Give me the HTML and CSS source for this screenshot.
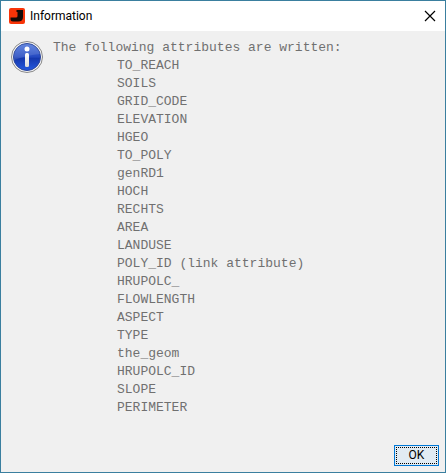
FILE: index.html
```html
<!DOCTYPE html>
<html lang="en">
<head>
  <meta charset="UTF-8" />
  <meta name="viewport" content="width=device-width, initial-scale=1" />
  <title>Information</title>
  <link rel="stylesheet" href="styles.css">
</head>
<body>
  <div class="dialog" role="dialog" aria-labelledby="title">
    <header class="titlebar">
      <svg class="app-icon" width="16" height="16" viewBox="0 0 16 16" aria-hidden="true">
        <rect width="16" height="16" rx="2" fill="#f83408" />
        <path d="M7.500 2h6.500v7q0 4.500-5 4.500H4q-2.500 0-2.500-2.500V9.500H7q1.500 0 1.500-1.500V4h-1z" fill="#140b08" />
      </svg>
      <h1 id="title" class="title">Information</h1>
      <button type="button" class="close" aria-label="Close">
        <svg width="12" height="12" viewBox="0 0 12 12" aria-hidden="true">
          <path d="M1 1l10 10M11 1L1 11" stroke="#000" stroke-width="1.200" />
        </svg>
      </button>
    </header>

    <main class="content">
      <svg class="info-icon" width="32" height="32" viewBox="0 0 32 32" aria-hidden="true">
        <defs>
          <linearGradient id="ball" x1="0" y1="0" x2="0" y2="1">
            <stop offset="0" stop-color="#5078dc" />
            <stop offset="0.500" stop-color="#2449c0" />
            <stop offset="0.550" stop-color="#1538ad" />
            <stop offset="1" stop-color="#2459e0" />
          </linearGradient>
          <linearGradient id="letter" x1="0" y1="0" x2="0" y2="1">
            <stop offset="0" stop-color="#fff" />
            <stop offset="1" stop-color="#dcdcdc" />
          </linearGradient>
        </defs>
        <circle cx="16" cy="16" r="15.500" fill="#f4f4f4" stroke="#888" />
        <circle cx="16" cy="16" r="13.500" fill="url(#ball)" stroke="#2a459c" />
        <path d="M3 19a13 13 0 0 1 26-6q-12 1-26 6z" fill="#fff" opacity="0.120" />
        <circle cx="16" cy="8" r="2.500" fill="#fff" />
        <rect x="14" y="12" width="4" height="14" rx="1.500" fill="url(#letter)" />
      </svg>
      <div class="message">
        <p>The following attributes are written:</p>
        <ul class="attributes">
          <li>TO_REACH</li>
          <li>SOILS</li>
          <li>GRID_CODE</li>
          <li>ELEVATION</li>
          <li>HGEO</li>
          <li>TO_POLY</li>
          <li>genRD1</li>
          <li>HOCH</li>
          <li>RECHTS</li>
          <li>AREA</li>
          <li>LANDUSE</li>
          <li>POLY_ID (link attribute)</li>
          <li>HRUPOLC_</li>
          <li>FLOWLENGTH</li>
          <li>ASPECT</li>
          <li>TYPE</li>
          <li>the_geom</li>
          <li>HRUPOLC_ID</li>
          <li>SLOPE</li>
          <li>PERIMETER</li>
        </ul>
      </div>
    </main>

    <footer class="actions">
      <button type="button" class="ok">OK</button>
    </footer>
  </div>
</body>
</html>
```
FILE: styles.css
```css
* {
  box-sizing: border-box;
}
body {
  margin: 0;
  font-family: Roboto, "Open Sans", sans-serif;
  font-size: 12px;
  color: #000;
}
.dialog {
  display: flex;
  flex-direction: column;
  min-height: 100vh;
  border: 1px solid #3a7f9f;
  background: #f0f0f0;
}
.titlebar {
  display: flex;
  align-items: center;
  gap: 5px;
  height: 30px;
  padding: 0 0 0 8px;
  background: #fff;
}
.title {
  flex: 1;
  margin: 0;
  font-size: 12px;
  font-weight: 400;
}
.close {
  display: flex;
  align-items: center;
  justify-content: center;
  width: 30px;
  height: 30px;
  padding: 0;
  border: none;
  background: none;
}
.content {
  display: flex;
  flex: 1;
  align-items: flex-start;
  gap: 10px;
  padding: 8px 10px;
}
.info-icon {
  flex: none;
  margin-top: 2px;
}
.message {
  font-family: "Liberation Mono", "Courier New", monospace;
  font-size: 13px;
  line-height: 18px;
  color: #707070;
}
.message p {
  margin: 0;
}
.attributes {
  margin: 0;
  padding: 0 0 0 64px;
  list-style: none;
}
.actions {
  display: flex;
  justify-content: flex-end;
  padding: 6px;
}
.ok {
  width: 45px;
  height: 21px;
  padding: 0;
  border: 1px solid #0078d7;
  background: #e1ebf3;
  font-family: inherit;
  font-size: 12px;
  line-height: 17px;
  color: #000;
  outline: 1px dotted #000;
  outline-offset: -3px;
}
```
